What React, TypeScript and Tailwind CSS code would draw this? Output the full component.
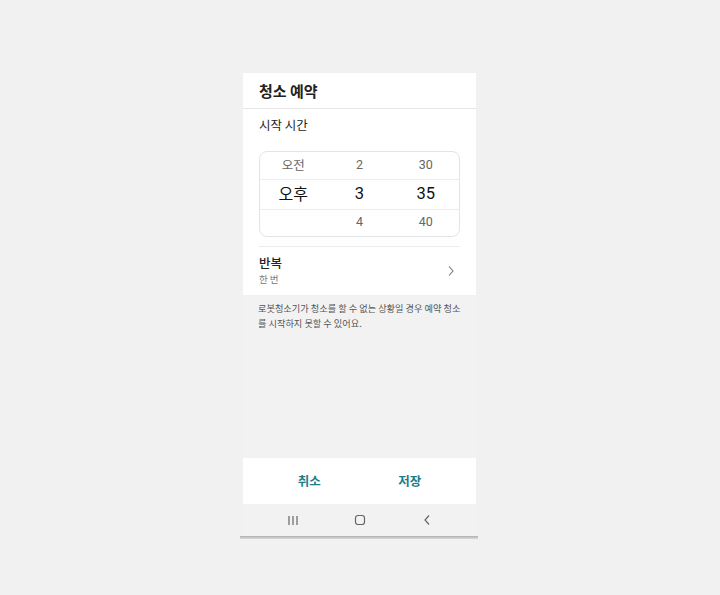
import React from "react";

const font = { fontFamily: '"Noto Sans CJK KR", "Noto Sans", Roboto, sans-serif' };
const num = { fontFamily: 'Roboto, "Noto Sans CJK KR", sans-serif' };

export default function App() {
  return (
    <div className="w-[720px] h-[595px] bg-[#f1f1f1] overflow-hidden" style={font}>
      <div className="ml-[243px] pt-[73px] w-[233px] flex flex-col">
        <div className="h-[36px] bg-white border-b border-[#e6e6e6] px-[16px] flex items-center">
          <span className="text-[15px] font-bold text-[#222] leading-none">청소 예약</span>
        </div>
        <div className="bg-white flex flex-col">
          <div className="px-[16px] pt-[8px] h-[24px] text-[12.5px] leading-[16px] text-[#222]">시작 시간</div>
          <div className="mx-[16px] mt-[18px] h-[86px] border border-[#e4e4e4] rounded-[8px] flex flex-col">
            <div className="h-[27px] grid grid-cols-3 items-center text-center text-[12.5px] leading-none text-[#666]">
              <span>오전</span>
              <span style={num}>2</span>
              <span style={num}>30</span>
            </div>
            <div className="h-[31px] grid grid-cols-3 items-center text-center text-[16px] leading-none text-[#111] border-y border-[#ececec]">
              <span className="-mt-[3px]">오후</span>
              <span style={num} className="text-[16.5px]">3</span>
              <span style={num} className="text-[16.5px]">35</span>
            </div>
            <div className="flex-1 grid grid-cols-3 items-center text-center text-[12.5px] leading-none text-[#666]">
              <span></span>
              <span style={num} className="-mt-[2px]">4</span>
              <span style={num} className="-mt-[2px]">40</span>
            </div>
          </div>
          <div className="mx-[16px] mt-[9px] border-t border-[#ececec]"></div>
          <div className="h-[48px] px-[16px] flex items-center justify-between">
            <div className="flex flex-col -mt-[1px]">
              <span className="text-[12.5px] font-medium text-[#222] leading-[16px]">반복</span>
              <span className="text-[9.5px] text-[#777] leading-[14px] mt-[1px]">한 번</span>
            </div>
            <svg width="8" height="12" viewBox="0 0 8 12" className="mr-[5px]">
              <path d="M2 1.5 L6 6 L2 10.5" fill="none" stroke="#777" strokeWidth="1.1" />
            </svg>
          </div>
        </div>
        <div className="h-[163px] bg-[#f2f2f2] px-[15px] pt-[6px] text-[9.2px] leading-[15px] text-[#555] whitespace-nowrap">
          로봇청소기가 청소를 할 수 없는 상황일 경우 예약 청소
          <br />를 시작하지 못할 수 있어요.
        </div>
        <div className="h-[46px] bg-white px-[16px] grid grid-cols-2 items-center text-center text-[12.5px] font-bold text-[#1a7d8c]">
          <span>취소</span>
          <span>저장</span>
        </div>
        <div className="h-[32px] bg-[#f2f2f2] px-[16px] grid grid-cols-3 items-center justify-items-center">
          <svg width="12" height="11" viewBox="0 0 12 11">
            <path d="M2 1 V10 M6 1 V10 M10 1 V10" stroke="#666" strokeWidth="1.2" />
          </svg>
          <svg width="12" height="12" viewBox="0 0 12 12">
            <rect x="1.5" y="1.5" width="9" height="9" rx="2.5" fill="none" stroke="#666" strokeWidth="1.2" />
          </svg>
          <svg width="10" height="12" viewBox="0 0 10 12">
            <path d="M7 1.5 L3 6 L7 10.5" fill="none" stroke="#666" strokeWidth="1.2" />
          </svg>
        </div>
        <div className="-ml-[3px] w-[238px] h-[3px] bg-gradient-to-b from-[#b0b0b0] to-[#dcdcdc]"></div>
      </div>
    </div>
  );
}
